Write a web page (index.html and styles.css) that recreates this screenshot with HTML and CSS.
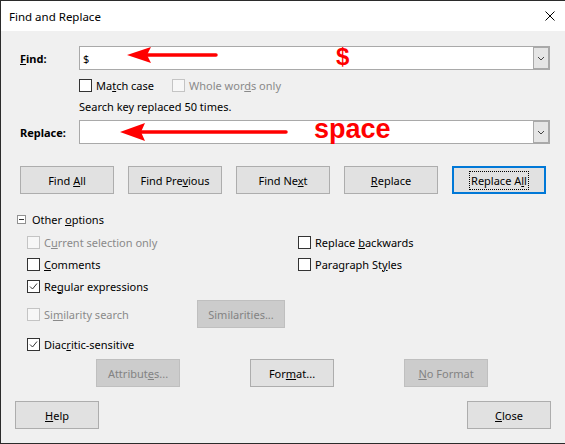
FILE: index.html
```html
<!DOCTYPE html>
<html>
<head>
<meta charset="utf-8">
<link rel="stylesheet" href="styles.css">
</head>
<body>
<div class="dialog">
  <div class="titlebar">
    <span class="title">Find and Replace</span>
    <svg class="close" width="10" height="10" viewBox="0 0 10 10"><path d="M0.5 0.5 L9.5 9.5 M9.5 0.5 L0.5 9.5" stroke="#000" stroke-width="1" fill="none"/></svg>
  </div>
  <div class="content">
    <div class="field-row find-row">
      <span class="field-label"><u>F</u>ind:</span>
      <div class="combo">
        <span class="combo-value">$</span>
        <span class="combo-btn"><svg width="8" height="5" viewBox="0 0 8 5"><path d="M1 1 L4 4 L7 1" stroke="#444" stroke-width="1" fill="none"/></svg></span>
        <svg class="arrow arrow-find" width="92" height="16" viewBox="0 0 92 16"><polygon points="0,8 24,0 20,8 24,16" fill="#f00"/><line x1="19" y1="8" x2="89" y2="8" stroke="#f00" stroke-width="3.5" stroke-linecap="round"/></svg>
        <span class="anno anno-dollar">$</span>
      </div>
    </div>
    <div class="checks-row">
      <label class="check w93"><span class="box"></span><span>Ma<u>t</u>ch case</span></label>
      <label class="check disabled"><span class="box"></span><span>Whole wor<u>d</u>s only</span></label>
    </div>
    <div class="status">Search key replaced 50 times.</div>
    <div class="field-row replace-row">
      <span class="field-label">Replace:</span>
      <div class="combo">
        <span class="combo-value"></span>
        <span class="combo-btn"><svg width="8" height="5" viewBox="0 0 8 5"><path d="M1 1 L4 4 L7 1" stroke="#444" stroke-width="1" fill="none"/></svg></span>
        <svg class="arrow arrow-replace" width="170" height="18" viewBox="0 0 170 18"><polygon points="0,9 25,0 21,9 25,18" fill="#f00"/><line x1="20" y1="9" x2="166" y2="9" stroke="#f00" stroke-width="3.5" stroke-linecap="round"/></svg>
        <span class="anno anno-space">space</span>
      </div>
    </div>
    <div class="btn-row">
      <div class="btn"><span>Find <u>A</u>ll</span></div>
      <div class="btn"><span>Find Pre<u>v</u>ious</span></div>
      <div class="btn"><span>Find Ne<u>x</u>t</span></div>
      <div class="btn"><span><u>R</u>eplace</span></div>
      <div class="btn default"><span class="focus">Replace A<u>l</u>l</span></div>
    </div>
    <div class="expander">
      <span class="exp-icon"></span>
      <span>Other <u>o</u>ptions</span>
    </div>
    <div class="options">
      <div class="opt-col">
        <label class="check opt disabled"><span class="box"></span><span>C<u>u</u>rrent selection only</span></label>
        <label class="check opt"><span class="box"></span><span><u>C</u>omments</span></label>
        <label class="check opt"><span class="box checked"><svg width="11" height="11" viewBox="0 0 11 11"><path d="M2 5.5 L4.5 8 L9 2.5" stroke="#333" stroke-width="1" fill="none"/></svg></span><span>Re<u>g</u>ular expressions</span></label>
        <div class="opt sim-row">
          <label class="check disabled sim-check"><span class="box"></span><span>Si<u>m</u>ilarity search</span></label>
          <div class="btn btn-disabled sim-btn"><span>Similarities...</span></div>
        </div>
        <label class="check opt diac"><span class="box checked"><svg width="11" height="11" viewBox="0 0 11 11"><path d="M2 5.5 L4.5 8 L9 2.5" stroke="#333" stroke-width="1" fill="none"/></svg></span><span>Diac<u>r</u>itic-sensitive</span></label>
      </div>
      <div class="opt-col">
        <label class="check opt"><span class="box"></span><span>Replace <u>b</u>ackwards</span></label>
        <label class="check opt"><span class="box"></span><span>Paragraph St<u>y</u>les</span></label>
      </div>
    </div>
    <div class="attr-row">
      <div class="btn btn-disabled small"><span>Attribut<u>e</u>s...</span></div>
      <div class="btn small"><span>For<u>m</u>at...</span></div>
      <div class="btn btn-disabled small"><span><u>N</u>o Format</span></div>
    </div>
    <div class="footer">
      <div class="btn small"><span><u>H</u>elp</span></div>
      <div class="btn small"><span><u>C</u>lose</span></div>
    </div>
  </div>
</div>
</body>
</html>
```

FILE: styles.css
```css
* { box-sizing: border-box; }
html, body { margin: 0; padding: 0; }
body {
  width: 565px;
  height: 444px;
  overflow: hidden;
  background: #f0f0f0;
  font-family: "Noto Sans", "DejaVu Sans", sans-serif;
  font-size: 11px;
  color: #000;
}
u { text-decoration: underline; text-underline-offset: 1px; }
.dialog {
  width: 565px;
  height: 444px;
  border: 1px solid #2b2b2b;
  border-right: none;
  background: #f0f0f0;
  display: flex;
  flex-direction: column;
}
.titlebar {
  height: 30px;
  flex: none;
  background: #fff;
  display: flex;
  align-items: center;
  justify-content: space-between;
  padding: 0 10px 0 8px;
  font-size: 11.5px;
}
.close { display: block; }
.content { flex: 1; display: flex; flex-direction: column; }

.field-row {
  display: flex;
  align-items: center;
  height: 24px;
  padding: 0 15px 0 19px;
}
.find-row { margin-top: 15px; }
.replace-row { margin-top: 5px; }
.field-label { width: 59px; font-weight: bold; flex: none; }
.combo {
  flex: 1;
  height: 24px;
  position: relative;
  background: #fff;
  border: 1px solid #a9a9a9;
  display: flex;
  align-items: stretch;
}
.combo-value { flex: 1; padding-left: 3px; display: flex; align-items: center; }
.combo-btn {
  width: 16px;
  background: #e5e5e5;
  border: 1px solid #a9a9a9;
  display: flex;
  align-items: center;
  justify-content: center;
}
.arrow { position: absolute; }
.arrow-find { left: 47px; top: 0; }
.arrow-replace { left: 40px; top: 2px; }
.anno {
  position: absolute;
  font-family: "Liberation Sans", Arial, sans-serif;
  font-weight: bold;
  color: #f00;
}
.anno-dollar { left: 256px; top: -2px; font-size: 24px; line-height: 24px; }
.anno-space { left: 234px; top: -5px; font-size: 27px; line-height: 27px; }

.checks-row {
  display: flex;
  align-items: center;
  height: 13px;
  margin: 9px 0 0 78px;
}
.check { display: flex; align-items: center; gap: 4px; }
.w93 { width: 93px; }
.box {
  width: 13px;
  height: 13px;
  flex: none;
  border: 1px solid #333;
  background: #fff;
  display: flex;
  align-items: center;
  justify-content: center;
}
.disabled { color: #8a8a8a; }
.disabled .box { border-color: #c4c4c4; background: #f7f7f7; }
.status { margin: 7px 0 0 78px; line-height: 16px; }

.btn-row { display: flex; gap: 14px; margin: 22px 0 0 19px; }
.btn {
  width: 94px;
  height: 28px;
  border: 1px solid #adadad;
  background: #e1e1e1;
  display: flex;
  align-items: center;
  justify-content: center;
  flex: none;
}
.btn.small { width: 84px; }
.btn.default { border: 2px solid #0078d7; }
.focus { outline: 1px dotted #000; padding: 0 1px; line-height: 17px; }
.btn-disabled { background: #cccccc; border-color: #bfbfbf; color: #838383; }

.expander {
  display: flex;
  align-items: center;
  gap: 6px;
  height: 16px;
  margin: 17px 0 0 16px;
}
.exp-icon {
  width: 9px;
  height: 9px;
  border: 1px solid #919191;
  position: relative;
  background: #fff;
}
.exp-icon::after {
  content: "";
  position: absolute;
  left: 1px;
  top: 3px;
  width: 5px;
  height: 1px;
  background: #333;
}

.options {
  display: grid;
  grid-template-columns: 271px 1fr;
  margin: 4px 0 0 26px;
}
.opt-col { display: flex; flex-direction: column; }
.opt { height: 22px; }
.sim-row { display: flex; align-items: center; height: 28px; margin-top: 3px; }
.sim-check { width: 170px; }
.sim-btn { width: 88px; }
.diac { margin-top: 5px; }

.attr-row { display: flex; gap: 70px; margin: 4px 0 0 95px; }
.footer {
  display: flex;
  justify-content: space-between;
  margin: 14px 0 0 14px;
  padding-right: 14px;
}
```
